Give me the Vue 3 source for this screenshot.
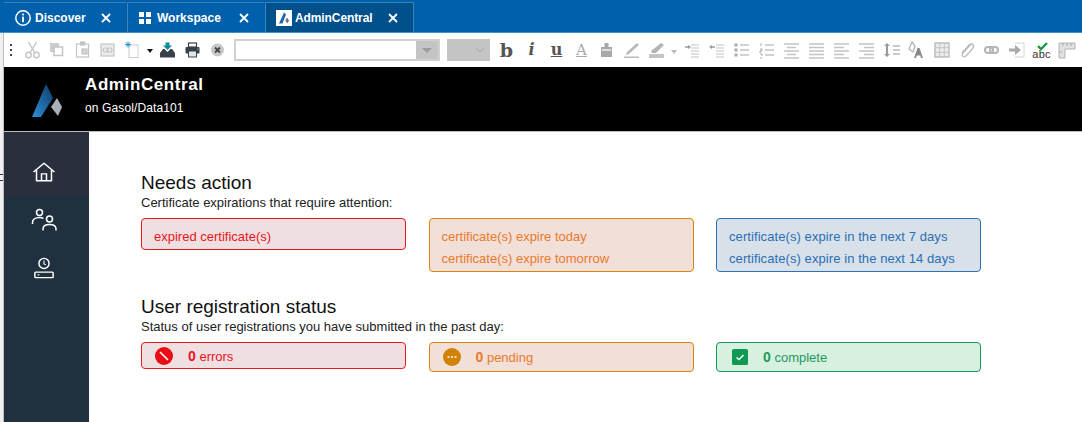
<script setup>
const needs = [
  { tone: 'red', lines: ['expired certificate(s)'] },
  { tone: 'orange', lines: ['certificate(s) expire today', 'certificate(s) expire tomorrow'] },
  { tone: 'blue', lines: ['certificate(s) expire in the next 7 days', 'certificate(s) expire in the next 14 days'] },
];
</script>

<template>
  <div class="app">
    <div class="tabbar">
      <div class="tab tab-discover">
        <svg class="tab-icon" width="18" height="18" viewBox="0 0 18 18">
          <circle cx="9" cy="9" r="7.2" fill="none" stroke="#fff" stroke-width="1.5" />
          <rect x="8.1" y="7.6" width="1.8" height="5.6" fill="#fff" />
          <rect x="8.1" y="4.6" width="1.8" height="1.8" fill="#fff" />
        </svg>
        <span class="tab-name">Discover</span>
        <svg class="tab-close" width="10" height="10" viewBox="0 0 10 10"><path d="M1 1l8 8M9 1l-8 8" stroke="#fff" stroke-width="1.8" /></svg>
      </div>
      <div class="tab tab-workspace">
        <svg class="tab-icon" width="14" height="14" viewBox="0 0 14 14">
          <rect x="1" y="1" width="5" height="5" fill="#fff" />
          <rect x="8" y="1" width="5" height="5" fill="#fff" />
          <rect x="1" y="8" width="5" height="5" fill="#fff" />
          <rect x="8" y="8" width="5" height="5" fill="#fff" />
        </svg>
        <span class="tab-name">Workspace</span>
        <svg class="tab-close" width="10" height="10" viewBox="0 0 10 10"><path d="M1 1l8 8M9 1l-8 8" stroke="#fff" stroke-width="1.8" /></svg>
      </div>
      <div class="tab tab-admin">
        <svg class="tab-icon" width="16" height="16" viewBox="0 0 16 16">
          <rect width="16" height="16" fill="#fff" />
          <path d="M3 13.5 8 2.5 10 4.5 6.5 13.5Z" fill="#1f66ad" />
          <path d="M11 7.5 13 10.5 11.5 13.5 9.3 10.5Z" fill="#6c7580" />
        </svg>
        <span class="tab-name">AdminCentral</span>
        <svg class="tab-close" width="10" height="10" viewBox="0 0 10 10"><path d="M1 1l8 8M9 1l-8 8" stroke="#fff" stroke-width="1.8" /></svg>
      </div>
    </div>

    <div class="frame">
      <div class="gutter"><i class="stray"></i></div>
      <div class="page">
        <div class="toolbar">
          <svg class="grip" width="4" height="14" viewBox="0 0 4 14">
            <rect x="1" y="1" width="2" height="2" fill="#444" />
            <rect x="1" y="6" width="2" height="2" fill="#444" />
            <rect x="1" y="11" width="2" height="2" fill="#444" />
          </svg>
          <!-- cut -->
          <svg class="tool" viewBox="0 0 25 24" fill="none" stroke="#c4c4c4" stroke-width="1.4">
            <path d="M8.500 4 15 15M16.500 4 10 15" />
            <circle cx="8.500" cy="17" r="2.700" />
            <circle cx="16.500" cy="17" r="2.700" />
          </svg>
          <!-- copy -->
          <svg class="tool" viewBox="0 0 25 24">
            <rect x="5" y="5" width="9" height="9" fill="#ccc" />
            <rect x="9" y="9" width="8.500" height="8.500" fill="#fff" stroke="#c4c4c4" stroke-width="1.500" />
          </svg>
          <!-- paste -->
          <svg class="tool" viewBox="0 0 25 24" fill="none" stroke="#c4c4c4" stroke-width="1.200">
            <rect x="6.500" y="6" width="12" height="13" />
            <rect x="10.500" y="4" width="4" height="3" fill="#c4c4c4" />
            <rect x="12" y="11" width="5" height="5" fill="#d4d4d4" />
          </svg>
          <!-- paste link -->
          <svg class="tool" viewBox="0 0 25 24" fill="none" stroke="#c4c4c4" stroke-width="1.200">
            <rect x="6" y="6" width="13" height="12" fill="#ececec" />
            <rect x="8" y="10" width="5" height="4" rx="2" />
            <rect x="12" y="10" width="5" height="4" rx="2" />
          </svg>
          <!-- new -->
          <svg class="tool" viewBox="0 0 25 24">
            <rect x="9" y="7" width="9" height="12.500" fill="#fff" stroke="#ccc" />
            <path d="M8 3.500v6M5 6.500h6M6 4.500l4 4M10 4.500l-4 4" stroke="#1b8fd0" stroke-width=".9" />
          </svg>
          <svg class="caret" width="6" height="4" viewBox="0 0 6 4"><path d="M0 0h6L3 4Z" fill="#111" /></svg>
          <!-- save to inbox -->
          <svg class="tool tool-save" viewBox="0 0 25 24">
            <path d="M10.500 4.500h4v3h2.500L12.500 12 8 7.500h2.500Z" fill="#0f8f98" />
            <path d="M8 11h1.500l3 3 3-3H17l3 4v4.500H5V15Z" fill="#3a4048" />
          </svg>
          <!-- print -->
          <svg class="tool" viewBox="0 0 25 24">
            <rect x="8.500" y="5" width="8" height="4" fill="#fff" stroke="#3a4048" stroke-width="1.200" />
            <rect x="5.500" y="9" width="14" height="6.500" rx="1" fill="#3a4048" />
            <rect x="8.500" y="13" width="8" height="6" fill="#d9e8f2" stroke="#3a4048" />
            <rect x="17" y="10.500" width="1.500" height="1.200" fill="#39c07a" />
          </svg>
          <!-- cancel -->
          <svg class="tool" viewBox="0 0 25 24">
            <circle cx="12.500" cy="12" r="6.500" fill="#c8c8c8" />
            <path d="M10 9.500l5 5M15 9.500l-5 5" stroke="#444" stroke-width="1.800" />
          </svg>

          <div class="font-input"><span class="font-drop"><i></i></span></div>
          <div class="size-input">
            <svg width="10" height="6" viewBox="0 0 10 6"><path d="M1 1l4 4 4-4" fill="none" stroke="#a8a8a8" /></svg>
          </div>

          <span class="glyph g-b">b</span>
          <span class="glyph g-i">i</span>
          <span class="glyph g-u">u</span>
          <span class="glyph g-a">A</span>
          <!-- fill -->
          <svg class="tool" viewBox="0 0 25 24">
            <rect x="10.500" y="5" width="4" height="4" fill="#a8a8a8" />
            <rect x="7" y="9" width="11" height="10" fill="#a8a8a8" />
            <rect x="8" y="11" width="9" height="2" fill="#ddd" />
          </svg>
          <!-- pen -->
          <svg class="tool" viewBox="0 0 25 24">
            <path d="M18 5l2 2-10 9-3 1 1-3Z" fill="#bbb" />
            <rect x="5" y="18.500" width="15" height="1.500" fill="#bbb" />
          </svg>
          <!-- highlighter -->
          <svg class="tool" viewBox="0 0 25 24">
            <path d="M17 5l3 2-8 8H8l-1-2Z" fill="#b4b4b4" />
            <rect x="5" y="16" width="15" height="4" fill="#c4c4c4" />
          </svg>
          <svg class="caret-small" width="6" height="4" viewBox="0 0 6 4"><path d="M0 0h6L3 4Z" fill="#bbb" /></svg>
          <!-- indent -->
          <svg class="tool" viewBox="0 0 25 24" stroke="#c4c4c4" stroke-width="1.200">
            <path d="M12 7h8M12 10h8M12 13h8M12 16h8M12 19h8" />
            <path d="M6 9h4" stroke="#999" stroke-width="1.500" /><path d="M9 7l3 2-3 2Z" fill="#999" stroke="none" />
          </svg>
          <!-- outdent -->
          <svg class="tool" viewBox="0 0 25 24" stroke="#c4c4c4" stroke-width="1.200">
            <path d="M12 7h8M12 10h8M12 13h8M12 16h8M12 19h8" />
            <path d="M7 9h4" stroke="#999" stroke-width="1.500" /><path d="M8 7L5 9l3 2Z" fill="#999" stroke="none" />
          </svg>
          <!-- bullets -->
          <svg class="tool" viewBox="0 0 25 24" stroke="#c4c4c4" stroke-width="1.300">
            <path d="M11 7h9M11 12h9M11 17h9" />
            <path d="M5.500 7h3M5.500 12h3M5.500 17h3" stroke="#aaa" stroke-width="3" />
          </svg>
          <!-- numbers -->
          <svg class="tool" viewBox="0 0 25 24" stroke="#c4c4c4" stroke-width="1.300">
            <path d="M11 7h9M11 12h9M11 17h9" />
            <path d="M7 5v3M6 11h2v2H6v2M6 16h2v2M6 20h2" stroke="#aaa" stroke-width="1" fill="none" />
          </svg>
          <!-- center -->
          <svg class="tool" viewBox="0 0 25 24" stroke="#c4c4c4" stroke-width="1.300">
            <path d="M5 6h15M8 9.500h9M5 13h15M8 16.500h9M5 20h15" />
          </svg>
          <!-- justify -->
          <svg class="tool" viewBox="0 0 25 24" stroke="#c4c4c4" stroke-width="1.300">
            <path d="M5 6h15M5 9.500h15M5 13h15M5 16.500h15M5 20h15" />
          </svg>
          <!-- left -->
          <svg class="tool" viewBox="0 0 25 24" stroke="#c4c4c4" stroke-width="1.300">
            <path d="M5 6h15M5 9.500h10M5 13h15M5 16.500h10M5 20h15" />
          </svg>
          <!-- right -->
          <svg class="tool" viewBox="0 0 25 24" stroke="#c4c4c4" stroke-width="1.300">
            <path d="M5 6h15M10 9.500h10M5 13h15M10 16.500h10M5 20h15" />
          </svg>
          <!-- line height -->
          <svg class="tool" viewBox="0 0 25 24">
            <path d="M8 5l3 3H9v8h2l-3 3-3-3h2V8H5Z" fill="#999" />
            <path d="M14 8h7M14 12h7M14 16h7" stroke="#bbb" stroke-width="1.300" />
          </svg>
          <!-- font style -->
          <svg class="tool" viewBox="0 0 25 24">
            <path d="M8 4l3 4-2 6-4-3Z" fill="none" stroke="#b4b4b4" stroke-width="1.300" />
            <path d="M10 20l3.500-10h2L19 20h-2l-.8-2.500h-3.400L12 20Z" fill="#8a8a8a" />
          </svg>
          <!-- table -->
          <svg class="tool" viewBox="0 0 25 24">
            <rect x="6" y="5" width="14" height="14" fill="#ededed" stroke="#b4b4b4" stroke-width="1.300" />
            <path d="M10.700 5v14M15.300 5v14M6 9.700h14M6 14.300h14" stroke="#c4c4c4" />
          </svg>
          <!-- clip -->
          <svg class="tool" viewBox="0 0 25 24" fill="none" stroke="#bbb" stroke-width="1.300">
            <path d="M17 6 9 15c-2 3 1 5 3 3l7-8c2-3-2-6-4-3L8 15" />
          </svg>
          <!-- link -->
          <svg class="tool" viewBox="0 0 25 24" fill="none" stroke="#b4b4b4" stroke-width="2">
            <rect x="6" y="9" width="8" height="6" rx="3" />
            <rect x="11" y="9" width="8" height="6" rx="3" />
          </svg>
          <!-- import -->
          <svg class="tool" viewBox="0 0 25 24">
            <path d="M11 5h9v14h-9" fill="none" stroke="#d4d4d4" />
            <path d="M5 10.500h6V7l6 5-6 5v-3.500H5Z" fill="#a8a8a8" />
          </svg>
          <!-- spell -->
          <svg class="tool tool-spell" viewBox="0 0 25 24">
            <path d="M9 8l3 3 6-6" fill="none" stroke="#1a9a3c" stroke-width="2.400" />
            <text x="12.500" y="20" text-anchor="middle" class="abc">abc</text>
          </svg>
          <!-- ruler -->
          <svg class="tool" viewBox="0 0 25 24">
            <path d="M5 5h16v6H11v9H5Z" fill="#e0e0e0" stroke="#b4b4b4" />
            <path d="M9 5v3M13 5v3M17 5v3M5 14h3" stroke="#aaa" />
          </svg>
        </div>

        <header class="brand">
          <svg class="logo" width="34" height="36" viewBox="0 0 34 36">
            <defs>
              <linearGradient id="logoBlue" x1="0" y1="1" x2="1" y2="0">
                <stop offset="0" stop-color="#2a8fdc" />
                <stop offset="1" stop-color="#123a66" />
              </linearGradient>
            </defs>
            <path d="M1 34 15 1 22 15 10 34Z" fill="url(#logoBlue)" />
            <path d="M26 15 31 24 27 33 20 24Z" fill="#a9b0b8" />
          </svg>
          <div class="brand-text">
            <div class="brand-title">AdminCentral</div>
            <div class="brand-sub">on Gasol/Data101</div>
          </div>
        </header>

        <div class="body">
          <nav class="side">
            <div class="nav-item nav-home">
              <svg width="24" height="22" viewBox="0 0 24 24" preserveAspectRatio="none" fill="none" stroke="#fff" stroke-width="1.500">
                <path d="M1.500 12 12 2.500 22.500 12M4.500 10v11.500h15V10" stroke-linejoin="round" />
                <path d="M9.500 21.500V14h5v7.500" />
              </svg>
            </div>
            <div class="nav-item">
              <svg width="26" height="24" viewBox="0 0 26 24" fill="none" stroke="#fff" stroke-width="1.500">
                <circle cx="8.500" cy="4.500" r="3" />
                <path d="M1.500 16v-1.500c0-3 3-5 7-5 1.500 0 3 .3 4 1" />
                <circle cx="18.500" cy="11" r="3" />
                <path d="M12 22.500V21c0-3 3-4.500 6.500-4.500S25 18 25 21v1.500" />
              </svg>
            </div>
            <div class="nav-item">
              <svg width="22" height="22" viewBox="0 0 24 24" fill="none" stroke="#fff" stroke-width="1.600">
                <circle cx="12" cy="7" r="5.500" />
                <path d="M12 3.800V7.500l2 1" stroke-width="1.200" />
                <rect x="2" y="16.500" width="20" height="6" rx="1" />
                <path d="M5 19.500h2" stroke-width="1.200" />
              </svg>
            </div>
          </nav>

          <main class="main">
            <section class="block">
              <h2>Needs action</h2>
              <p>Certificate expirations that require attention:</p>
              <div class="cards">
                <div v-for="card in needs" :key="card.tone" class="card" :class="card.tone">
                  <div v-for="line in card.lines" :key="line" class="card-line">{{ line }}</div>
                </div>
              </div>
            </section>

            <section class="block block-status">
              <h2>User registration status</h2>
              <p>Status of user registrations you have submitted in the past day:</p>
              <div class="cards">
                <div class="card status red status-short">
                  <svg width="18" height="18" viewBox="0 0 18 18">
                    <circle cx="9" cy="9" r="9" fill="#e80c14" />
                    <path d="M5 5l8 8" stroke="#fff" stroke-width="1.600" />
                  </svg>
                  <span class="status-text"><b>0</b> errors</span>
                </div>
                <div class="card status orange">
                  <svg width="18" height="18" viewBox="0 0 18 18">
                    <circle cx="9" cy="9" r="9" fill="#d08204" />
                    <path d="M4.500 9h2M8 9h2M11.500 9h2" stroke="#fff" stroke-width="1.600" />
                  </svg>
                  <span class="status-text"><b>0</b> pending</span>
                </div>
                <div class="card status green">
                  <svg class="check" width="16" height="16" viewBox="0 0 16 16">
                    <rect width="16" height="16" rx="1.500" fill="#0e9a52" />
                    <path d="M4.500 8.500l2.500 2 4.500-4.500" fill="none" stroke="#fff" stroke-width="1.500" />
                  </svg>
                  <span class="status-text"><b>0</b> complete</span>
                </div>
              </div>
            </section>
          </main>
        </div>
      </div>
    </div>
  </div>
</template>

<style>
html,
body {
  margin: 0;
  background: #fff;
  overflow: hidden;
}
</style>

<style scoped>
.app {
  width: 1082px;
  height: 422px;
  display: flex;
  flex-direction: column;
  font-family: "Liberation Sans", Arial, sans-serif;
  overflow: hidden;
}

.tabbar {
  height: 33px;
  flex: none;
  box-sizing: border-box;
  padding: 2px 0 0 4px;
  display: flex;
  gap: 1px;
  background: #0060ac;
  border-bottom: 1px solid #4a8ec6;
}

.tab {
  display: flex;
  align-items: center;
  box-sizing: border-box;
  padding-left: 10px;
  border-left: 1px solid #3b83bd;
  border-top: 1px solid #3b83bd;
  color: #fff;
}

.tab-discover { width: 122px; border-left: 0; }
.tab-workspace { width: 137px; }
.tab-admin { width: 149px; background: #00508c; border-right: 1px solid #3b83bd; }

.tab-icon { flex: none; margin-right: 3px; }
.tab-workspace .tab-icon { margin-right: 5px; }
.tab-admin .tab-icon { margin-right: 3px; }

.tab-name {
  font-size: 12px;
  font-weight: bold;
}

.tab-admin .tab-name { letter-spacing: -0.1px; }

.tab-close {
  flex: none;
  margin-left: auto;
  margin-right: 15px;
}

.frame {
  flex: 1;
  display: flex;
  min-height: 0;
}

.gutter {
  width: 4px;
  flex: none;
  box-sizing: border-box;
  padding-top: 141px;
  background: #f0f0f0;
  border-right: 1px solid #bcbcbc;
}

.stray {
  display: block;
  width: 3px;
  height: 5px;
  border-top: 1px solid #333;
  border-bottom: 1px solid #333;
}

.page {
  flex: 1;
  min-width: 0;
  display: flex;
  flex-direction: column;
}

.toolbar {
  height: 34px;
  flex: none;
  box-sizing: border-box;
  display: flex;
  align-items: center;
  padding-left: 5px;
  background: #fff;
}

.grip { flex: none; margin-right: 7px; }

.tool {
  width: 25px;
  height: 24px;
  flex: none;
}

.caret { flex: none; margin: 2px 2px 0 2px; }

.abc {
  font-family: "Liberation Sans", Arial, sans-serif;
  font-size: 11px;
  letter-spacing: 0.2px;
  fill: #333;
}

.font-input {
  flex: none;
  width: 206px;
  height: 22px;
  box-sizing: border-box;
  margin-left: 4px;
  border: 2px solid #d0d0d0;
  background: #fff;
  display: flex;
  justify-content: flex-end;
}

.font-drop {
  width: 22px;
  background: #c4c4c4;
  display: flex;
  align-items: center;
  justify-content: center;
}

.font-drop i {
  width: 0;
  height: 0;
  border-left: 5px solid transparent;
  border-right: 5px solid transparent;
  border-top: 5px solid #9c9c9c;
}

.size-input {
  flex: none;
  width: 43px;
  height: 22px;
  margin: 0 4px 0 7px;
  background: #c4c4c4;
  display: flex;
  align-items: center;
  justify-content: flex-end;
  padding-right: 5px;
  box-sizing: border-box;
}

.glyph {
  flex: none;
  width: 25px;
  text-align: center;
  font-family: "DejaVu Serif", "Liberation Serif", serif;
  line-height: 24px;
  color: #555;
}

.g-b { font-size: 19px; font-weight: bold; }
.g-i { font-size: 16px; font-style: italic; font-weight: bold; }
.g-u { font-size: 16px; font-weight: bold; text-decoration: underline; }
.g-a { font-size: 15px; color: #aaa; text-decoration: underline; }

.caret-small { flex: none; margin: 3px 2px 0 1.5px; }

.brand {
  height: 64px;
  flex: none;
  background: #000;
  display: flex;
  color: #fff;
  border-bottom: 1px solid #bbb;
}

.logo { flex: none; margin: 16px 0 0 27px; }

.brand-text { margin: 8px 0 0 20px; }

.brand-title {
  font-size: 17px;
  font-weight: bold;
  letter-spacing: 0.6px;
  line-height: 20px;
}

.brand-sub {
  margin-top: 6px;
  font-size: 12px;
  letter-spacing: 0.12px;
  line-height: 14px;
}

.body {
  flex: 1;
  min-height: 0;
  display: flex;
}

.side {
  width: 85px;
  flex: none;
  background: #21303f;
}

.nav-item {
  height: 48px;
  display: flex;
  align-items: center;
  justify-content: center;
  box-sizing: border-box;
  padding-right: 5px;
}

.nav-home {
  height: 64px;
  padding-top: 16px;
  background: #2a2f3e;
}

.main {
  flex: 1;
  min-width: 0;
  background: #fff;
  padding: 41px 0 0 52px;
}

.block h2 {
  margin: 0;
  font-size: 19px;
  font-weight: normal;
  line-height: 19px;
  color: #111;
}

.block p {
  margin: 4px 0 0;
  font-size: 13px;
  line-height: 14px;
  color: #222;
}

.block-status { margin-top: 25px; }

.cards {
  display: flex;
  align-items: flex-start;
  gap: 22.5px;
  margin-top: 8px;
}

.card {
  width: 265px;
  box-sizing: border-box;
  padding: 10px 12px 5px;
  border: 1px solid;
  border-radius: 4px;
  font-size: 13px;
}

.card-line { line-height: 15px; }
.card-line + .card-line { margin-top: 7px; }

.red { background: #f0dfe0; border-color: #e81a1f; color: #e8141e; }
.orange { background: #f2dfd7; border-color: #d9860b; color: #e87a2c; }
.blue { background: #d8e0e9; border-color: #2e70b2; color: #2a6fb5; letter-spacing: 0.08px; }
.green { background: #d8f0e0; border-color: #12985a; color: #1d9a5e; }

.status {
  display: flex;
  align-items: center;
  height: 30px;
  padding: 0 0 0 13px;
}

.status-short { height: 27px; }
.status .check { margin-left: 2px; }

.status-text { margin-left: 15px; }
.status-text b { font-size: 14px; }
</style>
